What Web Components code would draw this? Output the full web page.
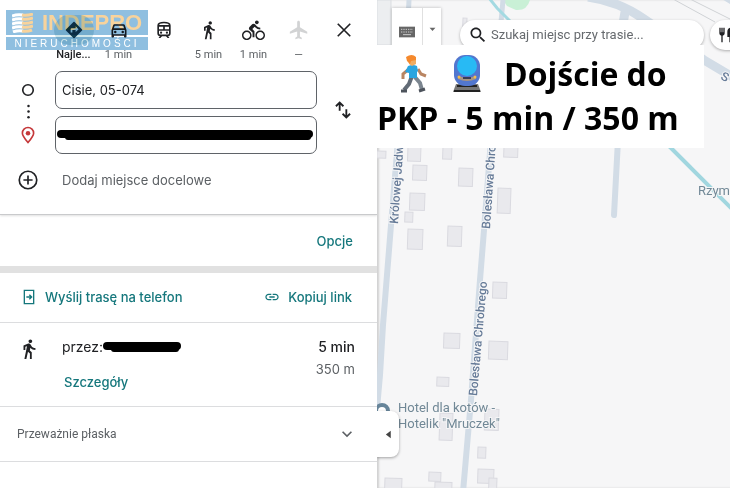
<!DOCTYPE html>
<html lang="pl">
<head>
<meta charset="utf-8">
<meta name="viewport" content="width=device-width, initial-scale=1">
<title>Trasa piesza</title>
<style>
    :root {
        --text-primary: #202124;
        --text-secondary: #5c6064;
        --accent: #15777c;
        --border-color: #dcdddf;
        --font-ui: Inter, "Liberation Sans", sans-serif;
        --font-map: Roboto, "Liberation Sans", sans-serif;
    }

    body {
        margin: 0;
        font-family: var(--font-ui);
        font-size: 13px;
        color: var(--text-primary);
        background: #fff;
    }
</style>
</head>
<body>
<route-app>
    <route-panel slot="panel">
        <brand-mark slot="brand" name="INDEPRO" tagline="NIERUCHOMOŚCI"></brand-mark>
        <travel-mode slot="modes" icon="directions" label="Najlepsza trasa" active>Najle...</travel-mode>
        <travel-mode slot="modes" icon="car" label="Samochód">1 min</travel-mode>
        <travel-mode slot="modes" icon="train" label="Transport publiczny"></travel-mode>
        <travel-mode slot="modes" icon="walk" label="Pieszo">5 min</travel-mode>
        <travel-mode slot="modes" icon="bike" label="Rower">1 min</travel-mode>
        <travel-mode slot="modes" icon="flight" label="Lot" disabled>—</travel-mode>
        <travel-mode slot="modes" icon="close" label="Zamknij"></travel-mode>
        <way-points slot="points" start="Cisie, 05-074"></way-points>
        <route-result slot="result" time="5 min" distance="350 m">przez:</route-result>
    </route-panel>
    <map-view slot="map">
        <map-toolbar slot="toolbar"></map-toolbar>
        <map-caption slot="caption"></map-caption>
    </map-view>
</route-app>

<script>
const ICONS = {
    directions: '<path d="M21.71 11.29l-9-9c-.39-.39-1.02-.39-1.41 0l-9 9c-.39.39-.39 1.02 0 1.41l9 9c.39.39 1.02.39 1.41 0l9-9c.39-.38.39-1.01 0-1.41zM14 14.5V12h-4v3H8v-4c0-.55.45-1 1-1h5V7.500l3.5 3.5-3.5 3.5z"/>',
    car: '<path d="M18.92 6.01C18.72 5.42 18.16 5 17.5 5h-11c-.66 0-1.21.42-1.42 1.01L3 12v8c0 .55.45 1 1 1h1c.55 0 1-.45 1-1v-1h12v1c0 .55.45 1 1 1h1c.55 0 1-.45 1-1v-8l-2.08-5.99zM6.85 7h10.29l1.04 3H5.81l1.04-3zM19 17H5v-5h14v5z"/><circle cx="7.500" cy="14.500" r="1.500"/><circle cx="16.500" cy="14.500" r="1.500"/>',
    train: '<path fill="none" stroke="currentColor" stroke-width="2" d="M5 16V6.500C5 3.500 8 3 12 3s7 .5 7 3.500V16c0 1.500-1 2.500-2.500 2.500h-9C6 18.500 5 17.500 5 16zM5 7h14M5 12h14M12 7v5"/><path d="M8 18l-2.500 3.500h2.200L10 19zM16 18l2.500 3.500h-2.200L14 19z"/><circle cx="8.500" cy="15.200" r="1.300"/><circle cx="15.500" cy="15.200" r="1.300"/>',
    walk: '<path d="M13.5 5.5c1.1 0 2-.9 2-2s-.9-2-2-2-2 .9-2 2 .9 2 2 2zM9.8 8.9L7 23h2.1l1.8-8 2.1 2v6h2v-7.5l-2.1-2 .6-3C14.8 12 16.8 13 19 13v-2c-1.9 0-3.5-1-4.3-2.4l-1-1.6c-.4-.6-1-1-1.700-1-.3 0-.5.1-.8.1L6 8.3V13h2V9.6l1.8-.7"/>',
    bike: '<path d="M15.5 5.5c1.1 0 2-.9 2-2s-.9-2-2-2-2 .9-2 2 .9 2 2 2zM5 12c-2.8 0-5 2.2-5 5s2.2 5 5 5 5-2.2 5-5-2.2-5-5-5zm0 8.5c-1.9 0-3.5-1.6-3.5-3.5s1.6-3.5 3.5-3.5 3.5 1.6 3.5 3.5-1.6 3.5-3.5 3.5zm5.8-10l2.4-2.4.8.8c1.3 1.3 3 2.1 5.1 2.1V9c-1.5 0-2.7-.6-3.6-1.5l-1.9-1.9c-.5-.4-1-.6-1.6-.6s-1.1.2-1.4.6L7.800 8.4c-.4.4-.6.9-.6 1.4 0 .6.2 1.1.6 1.4L11 14v5h2v-6.2l-2.2-2.3zM19 12c-2.8 0-5 2.2-5 5s2.2 5 5 5 5-2.2 5-5-2.2-5-5-5zm0 8.5c-1.9 0-3.5-1.6-3.5-3.5s1.6-3.5 3.5-3.5 3.5 1.6 3.5 3.5-1.6 3.5-3.5 3.5z"/>',
    flight: '<path d="M21 16v-2l-8-5V3.500c0-.83-.67-1.5-1.5-1.5S10 2.670 10 3.500V9l-8 5v2l8-2.5V19l-2 1.5V22l3.500-1 3.500 1v-1.5L13 19v-5.5l8 2.5z"/>',
    close: '<path fill="none" stroke="currentColor" stroke-width="2" d="M4.500 4.500l15 15M19.500 4.500l-15 15"/>',
    start: '<circle cx="12" cy="12" r="9" fill="none" stroke="currentColor" stroke-width="2.800"/>',
    dots: '<circle cx="12" cy="3" r="2"/><circle cx="12" cy="12" r="2"/><circle cx="12" cy="21" r="2"/>',
    pin: '<path fill="none" stroke="currentColor" stroke-width="2.200" d="M12 22C7 16 4.500 12.500 4.500 9.500a7.500 7.500 0 0 1 15 0C19.500 12.500 17 16 12 22z"/><circle cx="12" cy="9.500" r="3"/>',
    add: '<circle cx="12" cy="12" r="10.500" fill="none" stroke="currentColor" stroke-width="2"/><path d="M11 6.500h2V11h4.500v2H13v4.500h-2V13H6.500v-2H11z"/>',
    swap: '<path fill="none" stroke="currentColor" stroke-width="2.200" d="M8 13V3M3.500 7.500L8 3l4.500 4.500M16 11v10M11.500 16.500L16 21l4.500-4.500"/>',
    phone: '<path fill="none" stroke="currentColor" stroke-width="2" d="M19 8V2H5v20h14v-6M19 6v12M8 12h8M12.500 8.500L16 12l-3.500 3.500"/>',
    link: '<path d="M3.900 12c0-1.710 1.390-3.100 3.100-3.100h4V7H7c-2.760 0-5 2.240-5 5s2.240 5 5 5h4v-1.900H7c-1.710 0-3.100-1.390-3.100-3.100zM8 13h8v-2H8v2zm9-6h-4v1.900h4c1.710 0 3.100 1.390 3.100 3.100s-1.390 3.100-3.100 3.100h-4V17h4c2.760 0 5-2.240 5-5s-2.240-5-5-5z"/>',
    expand: '<path d="M7.410 8.590L12 13.170l4.590-4.580L18 10l-6 6-6-6z"/>',
    search: '<path d="M15.5 14h-.79l-.28-.27C15.410 12.590 16 11.110 16 9.500 16 5.910 13.090 3 9.500 3S3 5.910 3 9.500 5.910 16 9.500 16c1.610 0 3.090-.59 4.230-1.570l.27.28v.79l5 4.990L20.490 19l-4.990-5zm-6 0C7.010 14 5 11.990 5 9.500S7.010 5 9.500 5 14 7.010 14 9.500 11.990 14 9.500 14z"/>',
    keyboard: '<path fill="#666" d="M0 4h24v16H0z"/><path stroke="#ccc" stroke-width="1.500" stroke-dasharray="2 1.500" d="M3 8h18M3 12h18"/><path stroke="#ccc" stroke-width="1.500" d="M6 16h12"/>',
    caret: '<path d="M2 6h20L12 17z"/>',
    left: '<path d="M18 2v20L5 12z"/>',
    food: '<path d="M2 1h2v7h1V1h2v7h1V1h2v8c0 2-1 3.500-3 4v10H5V13c-2-.5-3-2-3-4zM14 7c0-4 3-6 6-6v22h-3v-8h-3z"/>'
};

function attach(el, html) {
    const root = el.attachShadow({ mode: 'open' });
    root.innerHTML = html;
    return root;
}

class UiIcon extends HTMLElement {
    connectedCallback() {
        if (this.shadowRoot) return;
        attach(this, `
            <style>
                :host { display: block; flex: none; width: var(--icon-size, 20px); height: var(--icon-size, 20px); }
                svg { display: block; width: 100%; height: 100%; fill: currentColor; }
            </style>
            <svg viewBox="0 0 24 24" aria-hidden="true">${ICONS[this.getAttribute('name')]}</svg>
        `);
    }
}
customElements.define('ui-icon', UiIcon);

class RouteApp extends HTMLElement {
    constructor() {
        super();
        attach(this, `
            <style>
                :host { display: grid; grid-template-columns: 377px 1fr; min-height: 100vh; }
            </style>
            <slot name="panel"></slot>
            <slot name="map"></slot>
        `);
    }
}
customElements.define('route-app', RouteApp);

class BrandMark extends HTMLElement {
    connectedCallback() {
        attach(this, `
            <style>
                :host {
                    display: block;
                    width: 142px;
                    color: #fff;
                    font-family: "Liberation Sans", Arial, sans-serif;
                    mix-blend-mode: multiply;
                    pointer-events: none;
                }
                .top, .bottom { display: flex; align-items: center; background: #8fbfe0; }
                .top { height: 25px; gap: 9px; padding-left: 6px; color: #f8d39c; font-size: 22px; font-weight: 700; }
                .bottom { height: 13px; margin-top: 2px; justify-content: center; font-size: 10px; line-height: 11px; letter-spacing: 3px; }
                svg { width: 21px; height: 20px; }
            </style>
            <div class="top">
                <svg viewBox="0 0 21 20" aria-hidden="true">
                    <path stroke="#fff" stroke-width="3" fill="none" d="M0 3q5-2 11-1M0 7q5-2 11-1M0 11q5-2 11-1M0 15q5-2 11-1M1 19q5-2 10-1"/>
                    <path stroke="#f8d39c" stroke-width="3" fill="none" d="M10 2q5 1 11-1M10 6q5 1 11-1M10 10q5 1 11-1M10 14q5 1 11-1M10 18q5 1 10-1"/>
                </svg>
                <span>${this.getAttribute('name')}</span>
            </div>
            <div class="bottom">${this.getAttribute('tagline')}</div>
        `);
    }
}
customElements.define('brand-mark', BrandMark);

class TravelMode extends HTMLElement {
    connectedCallback() {
        const icon = this.getAttribute('icon');
        attach(this, `
            <style>
                :host { display: block; }
                button {
                    display: flex;
                    flex-direction: column;
                    align-items: center;
                    gap: 4px;
                    width: 100%;
                    padding: 0;
                    border: 0;
                    background: none;
                    color: var(--text-primary);
                    font: 11px/12px var(--font-map);
                    white-space: nowrap;
                    cursor: pointer;
                }
                .glyph { display: grid; place-items: center; width: 40px; height: 30px; border-radius: 15px; --icon-size: 20px; }
                .label { color: var(--text-secondary); min-height: 12px; }
                :host([active]) .glyph { background: #cfe6ea; color: #123c50; }
                :host([active]) .label { color: var(--text-primary); font-weight: 500; }
                :host([disabled]) .glyph { color: #d2d3d4; }
                :host([icon="bike"]) .glyph { --icon-size: 23px; }
                :host([icon="flight"]) .glyph { --icon-size: 22px; }
            </style>
            <button type="button" aria-label="${this.getAttribute('label')}" ${this.hasAttribute('disabled') ? 'disabled' : ''}>
                <span class="glyph"><ui-icon name="${icon}"></ui-icon></span>
                <span class="label"><slot></slot></span>
            </button>
        `);
    }
}
customElements.define('travel-mode', TravelMode);

// Marker stroke that hides private parts of an address
class MarkerStroke extends HTMLElement {
    constructor() {
        super();
        attach(this, `
            <style>
                :host { display: block; height: 10px; }
                i { display: block; height: 8px; border-radius: 4px; background: #000; }
                i + i { height: 6px; margin: -4px 2px 0 8px; }
            </style>
            <i></i><i></i>
        `);
    }
}
customElements.define('marker-stroke', MarkerStroke);

class WayPoints extends HTMLElement {
    connectedCallback() {
        attach(this, `
            <style>
                :host { display: block; }
                .points { display: grid; grid-template-columns: 55px 1fr 60px; }
                .rail {
                    display: flex;
                    flex-direction: column;
                    align-items: center;
                    justify-content: space-between;
                    padding: 12px 0 10px 1px;
                }
                .rail [name="start"] { --icon-size: 14px; }
                .rail [name="dots"] { --icon-size: 15px; }
                .rail [name="pin"] { --icon-size: 18px; color: #c5383a; }
                .fields { display: grid; gap: 7px; }
                .field { display: grid; align-items: center; }
                .field > * { grid-area: 1 / 1; }
                input {
                    box-sizing: border-box;
                    width: 100%;
                    height: 38px;
                    padding: 0 6px;
                    border: 1px solid #5f6368;
                    border-radius: 7px;
                    background: #fff;
                    color: var(--text-primary);
                    font: 13px var(--font-ui);
                }
                marker-stroke { margin: 0 4px 0 2px; }
                button {
                    display: flex;
                    align-items: center;
                    padding: 0;
                    border: 0;
                    background: none;
                    color: var(--text-primary);
                    font: 13px/20px var(--font-ui);
                    cursor: pointer;
                }
                .swap { justify-content: center; padding: 0 9px 6px 0; }
                .add { gap: 24px; margin: 16px 0 0 18px; color: var(--text-secondary); }
                .add ui-icon { color: var(--text-primary); }
            </style>
            <div class="points">
                <div class="rail">
                    <ui-icon name="start"></ui-icon>
                    <ui-icon name="dots"></ui-icon>
                    <ui-icon name="pin"></ui-icon>
                </div>
                <div class="fields">
                    <div class="field"><input type="text" aria-label="Punkt początkowy" value="${this.getAttribute('start')}"></div>
                    <div class="field"><input type="text" aria-label="Miejsce docelowe"><marker-stroke></marker-stroke></div>
                </div>
                <button class="swap" type="button" aria-label="Zamień"><ui-icon name="swap"></ui-icon></button>
            </div>
            <button class="add" type="button"><ui-icon name="add"></ui-icon>Dodaj miejsce docelowe</button>
        `);
    }
}
customElements.define('way-points', WayPoints);

class RouteResult extends HTMLElement {
    connectedCallback() {
        attach(this, `
            <style>
                :host {
                    display: grid;
                    grid-template-columns: 44px 1fr auto;
                    padding: 13px 22px 14px 18px;
                    border-bottom: 1px solid var(--border-color);
                }
                ui-icon { --icon-size: 22px; padding-top: 2px; }
                .via { display: flex; align-items: center; font-size: 14px; line-height: 22px; }
                marker-stroke { width: 78px; }
                a { display: inline-block; margin: 14px 2px 0; color: var(--accent); font-weight: 500; line-height: 20px; text-decoration: none; }
                .numbers { text-align: right; }
                .time { font-size: 14px; font-weight: 500; line-height: 22px; }
                .distance { color: var(--text-secondary); line-height: 22px; }
            </style>
            <ui-icon name="walk"></ui-icon>
            <div>
                <div class="via"><slot></slot><marker-stroke></marker-stroke></div>
                <a href="#details">Szczegóły</a>
            </div>
            <div class="numbers">
                <div class="time">${this.getAttribute('time')}</div>
                <div class="distance">${this.getAttribute('distance')}</div>
            </div>
        `);
    }
}
customElements.define('route-result', RouteResult);

class RoutePanel extends HTMLElement {
    constructor() {
        super();
        attach(this, `
            <style>
                :host { display: block; position: relative; background: #fff; box-shadow: 0 0 3px rgba(0, 0, 0, .4); }
                header { padding-bottom: 24px; border-bottom: 1px solid #c9cacc; box-shadow: 0 1px 2px rgba(0, 0, 0, .12); }
                ::slotted([slot="brand"]) { position: absolute; top: 10px; left: 6px; }
                nav { display: grid; grid-template-columns: repeat(7, 1fr); padding: 15px 11px 10px 51px; }
                button {
                    display: flex;
                    align-items: center;
                    gap: 8px;
                    padding: 0;
                    border: 0;
                    background: none;
                    color: var(--accent);
                    font: 500 13px/20px var(--font-ui);
                    cursor: pointer;
                    --icon-size: 16px;
                }
                .options { display: flex; justify-content: flex-end; padding: 16px 24px 15px; border-bottom: 7px solid #e1e1e1; }
                .share { display: flex; justify-content: space-between; padding: 14px 25px 15px 21px; border-bottom: 1px solid var(--border-color); }
                .terrain {
                    width: 100%;
                    justify-content: space-between;
                    padding: 17px 20px 17px 17px;
                    border-bottom: 1px solid var(--border-color);
                    color: var(--text-secondary);
                    font: 12px/20px var(--font-map);
                    --icon-size: 20px;
                }
            </style>
            <header>
                <nav><slot name="modes"></slot></nav>
                <slot name="points"></slot>
            </header>
            <slot name="brand"></slot>
            <div class="options"><button type="button">Opcje</button></div>
            <div class="share">
                <button type="button"><ui-icon name="phone"></ui-icon>Wyślij trasę na telefon</button>
                <button type="button"><ui-icon name="link"></ui-icon>Kopiuj link</button>
            </div>
            <slot name="result"></slot>
            <button class="terrain" type="button">Przeważnie płaska<ui-icon name="expand"></ui-icon></button>
        `);
    }
}
customElements.define('route-panel', RoutePanel);

class MapToolbar extends HTMLElement {
    constructor() {
        super();
        attach(this, `
            <style>
                :host { display: flex; align-items: flex-start; padding: 8px 0 0 15px; }
                button { display: grid; place-items: center; padding: 0; border: 0; background: #fff; color: var(--text-primary); cursor: pointer; }
                .keys { display: flex; height: 48px; box-shadow: 0 0 3px rgba(0, 0, 0, .25); }
                .keys button { width: 30px; --icon-size: 16px; }
                .keys button + button { width: 19px; border-left: 1px solid #e0e0e0; color: #666; --icon-size: 7px; padding-bottom: 6px; }
                label {
                    display: flex;
                    flex: 0 0 244px;
                    box-sizing: border-box;
                    align-items: center;
                    gap: 3px;
                    height: 30px;
                    margin: 12px 6px 0 19px;
                    padding-left: 8px;
                    border-radius: 15px;
                    background: #fff;
                    box-shadow: 0 1px 3px rgba(0, 0, 0, .3);
                }
                input { flex: 1; min-width: 0; padding: 0 0 2px; border: 0; background: none; color: var(--text-primary); font: 13px var(--font-map); outline: 0; }
                input::placeholder { color: #666a6e; opacity: 1; }
                .chip { flex: none; width: 120px; height: 30px; margin-top: 12px; padding-left: 8px; border-radius: 15px; justify-items: start; box-shadow: 0 1px 3px rgba(0, 0, 0, .3); --icon-size: 16px; }
            </style>
            <div class="keys">
                <button type="button" aria-label="Klawiatura"><ui-icon name="keyboard"></ui-icon></button>
                <button type="button" aria-label="Wybierz klawiaturę"><ui-icon name="caret"></ui-icon></button>
            </div>
            <label><ui-icon name="search"></ui-icon><input type="text" aria-label="Szukaj" placeholder="Szukaj miejsc przy trasie..."></label>
            <button class="chip" type="button" aria-label="Restauracje"><ui-icon name="food"></ui-icon></button>
        `);
    }
}
customElements.define('map-toolbar', MapToolbar);

class MapCaption extends HTMLElement {
    constructor() {
        super();
        attach(this, `
            <style>
                :host {
                    display: block;
                    box-sizing: border-box;
                    width: 327px;
                    height: 103px;
                    padding: 7px 0 0;
                    background: #fff;
                    color: #000;
                    font: 700 32px/44px "Open Sans", "Noto Sans", sans-serif;
                    white-space: nowrap;
                }
                .first { display: flex; align-items: center; padding-left: 23px; }
                svg { flex: none; width: 30px; height: 38px; margin-right: 22px; }
            </style>
            <div class="first">
                <svg viewBox="0 0 30 38" aria-hidden="true">
                    <path fill="none" stroke="#626b76" stroke-width="4" d="M12 21l-3 8-5 6"/>
                    <path fill="none" stroke="#7b858f" stroke-width="4" d="M14 21l6 7 2 7"/>
                    <path fill="none" stroke="#4d535c" stroke-width="3" d="M1 36h6M19 36l6-2"/>
                    <path fill="none" stroke="#b98562" stroke-width="3" d="M9 14l-6 5v5M18 14l3 5 5 2"/>
                    <path fill="#2aa5e0" d="M8 11q5-2 9 0l1 5-1 1v6H9v-5l-4-1z"/>
                    <path fill="#f0ad62" d="M8 3h8v6l-4 2-3-2z"/>
                    <path fill="#f5892d" d="M6 2q6-4 10 0v3l-5 1-1 3-3-3z"/>
                </svg>
                <svg viewBox="0 0 30 38" aria-hidden="true">
                    <path fill="#777" d="M4 29h22l3 8H1z"/>
                    <path fill="none" stroke="#222" stroke-width="2" d="M2 36h26M5 31h20"/>
                    <rect x="2" width="26" height="31" rx="11" fill="#5277cf"/>
                    <ellipse cx="15" cy="11" rx="10" ry="10" fill="#28baf4"/>
                    <path fill="#a89582" d="M6 21q9 3 18 0v3q-9 4-18 0z"/>
                    <path fill="#3b3d54" d="M11 22h8v2h-8z"/>
                    <circle cx="7" cy="22" r="1.500" fill="#f4bc4d"/>
                    <circle cx="23" cy="22" r="1.500" fill="#f4bc4d"/>
                </svg>
                <span>Dojście do</span>
            </div>
            <div>PKP - 5 min / 350 m</div>
        `);
    }
}
customElements.define('map-caption', MapCaption);

// x, y, width, height of each house footprint
const BUILDINGS = [
    [377, 151, 9, 7], [408, 146, 13, 15], [443, 146, 9, 13], [504, 146, 14, 11],
    [413, 165, 14, 15], [459, 168, 14, 18], [410, 193, 15, 17], [405, 212, 8, 10],
    [408, 229, 15, 20], [448, 226, 14, 20], [498, 188, 13, 25], [493, 282, 14, 16],
    [444, 333, 16, 15], [489, 341, 19, 18], [437, 377, 12, 9], [440, 413, 13, 27],
    [485, 409, 14, 21], [478, 447, 8, 11], [385, 478, 17, 12], [429, 472, 12, 9],
    [435, 482, 17, 8], [478, 469, 16, 14], [489, 478, 8, 12], [463, 18, 4, 12]
];

class MapView extends HTMLElement {
    constructor() {
        super();
        const houses = BUILDINGS.map(([x, y, w, h]) =>
            `<rect x="${x}" y="${y}" width="${w}" height="${h}" transform="rotate(2 ${x} ${y})"/>`).join('');

        attach(this, `
            <style>
                :host { display: block; position: relative; overflow: hidden; background: #f6f6f7; box-shadow: inset 2px 0 2px rgba(0, 0, 0, .15); min-width: 0; }
                .canvas { position: absolute; inset: 0; width: 100%; height: 100%; }
                .street { font: 500 12px var(--font-map); fill: #667b98; paint-order: stroke; stroke: #f6f6f7; stroke-width: 2px; }
                .place { font: 13px var(--font-map); fill: #718896; paint-order: stroke; stroke: #f6f6f7; stroke-width: 2px; }
                ::slotted([slot="toolbar"]) { position: relative; }
                ::slotted([slot="caption"]) { position: absolute; top: 45px; left: 0; }
                .collapse {
                    position: absolute;
                    top: 411px;
                    left: 0;
                    display: grid;
                    place-items: center;
                    width: 22px;
                    height: 46px;
                    padding: 0;
                    border: 0;
                    border-radius: 0 8px 8px 0;
                    background: #fff;
                    color: #444;
                    box-shadow: 0 1px 3px rgba(0, 0, 0, .35);
                    --icon-size: 9px;
                }
            </style>
            <svg class="canvas" viewBox="377 0 353 488" preserveAspectRatio="xMinYMin slice">
                <path fill="#eceef0" stroke="#dadde1" d="M377 0h14v45h-14z"/>
                <path fill="#c9f0d6" d="M503 0h27q-3 11-14 10l-9-4z"/>
                <g fill="none" stroke="#d2dce6">
                    <path stroke-width="5" d="M409 0l-1 20"/>
                    <path stroke-width="5" d="M503 0l-2 22"/>
                    <path stroke-width="9" d="M588-3q30 4 56 22l60 41 30 18M625 12l-2 12"/>
                    <path stroke-width="6" d="M398 140l-7 85-8 100-3 50-4 45"/>
                    <path stroke-width="6" d="M491 140l-7 90-4 50-9 120-8 92"/>
                    <path stroke-width="6" stroke-linecap="round" d="M618 140l-4 75"/>
                    <path stroke-width="4" d="M724-2l10 6"/>
                </g>
                <path fill="none" stroke="#a4dae2" stroke-width="3" d="M489-2l8 10 14 14"/>
                <path fill="none" stroke="#a1d6df" stroke-width="4" d="M665 142l69 69"/>
                <path fill="none" stroke="#cfd2d5" d="M673-1l42 23M690-1l44 22"/>
                <g fill="#e9e9ed" stroke="#dadae0">${houses}</g>
                <text class="street" transform="translate(398 224) rotate(-86)">Królowej Jadwigi</text>
                <text class="street" transform="translate(490 229) rotate(-86)">Bolesława Chrobrego</text>
                <text class="street" transform="translate(477 396) rotate(-85)">Bolesława Chrobrego</text>
                <text class="street" transform="translate(720 79) rotate(25)">S</text>
                <text class="place" x="698" y="195">Rzym</text>
                <text class="place" x="398" y="412">Hotel dla kotów -</text>
                <text class="place" x="398" y="428">Hotelik "Mruczek"</text>
                <circle cx="382" cy="411" r="6" fill="#fff" stroke="#67859a" stroke-width="4"/>
            </svg>
            <slot name="toolbar"></slot>
            <slot name="caption"></slot>
            <button class="collapse" type="button" aria-label="Zwiń panel"><ui-icon name="left"></ui-icon></button>
        `);
    }
}
customElements.define('map-view', MapView);
</script>
</body>
</html>
